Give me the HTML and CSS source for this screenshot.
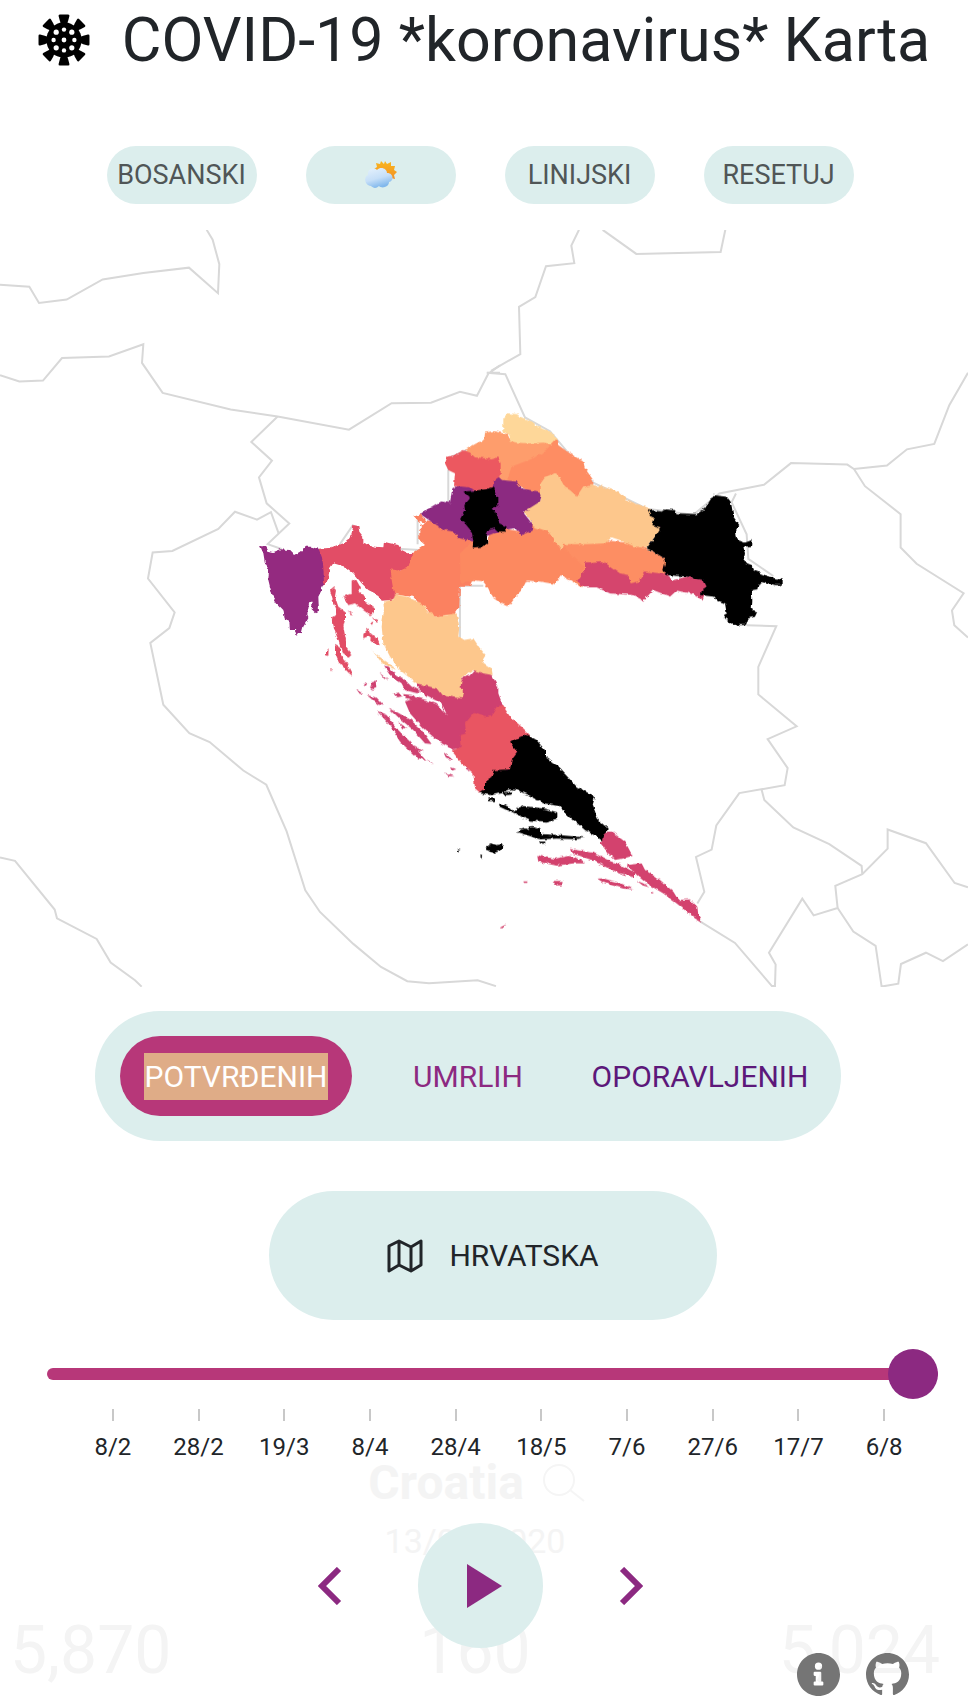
FILE: index.html
```html
<!DOCTYPE html>
<html lang="hr">
<head>
<meta charset="utf-8">
<meta name="viewport" content="width=device-width, initial-scale=1">
<title>COVID-19 *koronavirus* Karta</title>
<link rel="stylesheet" href="styles.css">
</head>
<body>
<header class="header">
  <svg class="virus" viewBox="-25 -25 50 50" aria-hidden="true">
    <defs><g id="spike"><path d="M-4-24.500H4Q5.500-24.500 5.200-23L4-18.500Q3-17 3-14H-3Q-3-17-4-18.500L-5.200-23Q-5.500-24.500-4-24.500Z"/></g></defs>
    <circle r="17"/>
    <use href="#spike"/><use href="#spike" transform="rotate(45)"/><use href="#spike" transform="rotate(90)"/><use href="#spike" transform="rotate(135)"/><use href="#spike" transform="rotate(180)"/><use href="#spike" transform="rotate(225)"/><use href="#spike" transform="rotate(270)"/><use href="#spike" transform="rotate(315)"/>
    <g fill="#fff"><circle r="2.300"/><circle cx="10" r="2.100"/><circle cx="-10" r="2.100"/><circle cy="10" r="2.100"/><circle cy="-10" r="2.100"/><circle cx="7.500" cy="7.500" r="2.500"/><circle cx="-7.500" cy="7.500" r="2.500"/><circle cx="7.500" cy="-7.500" r="2.500"/><circle cx="-7.500" cy="-7.500" r="2.500"/></g>
  </svg>
  <h1 class="title">COVID-19 *koronavirus* Karta</h1>
</header>

<nav class="options">
  <button class="option" type="button">BOSANSKI</button>
  <button class="option" type="button" aria-label="Tema">
    <svg class="weather" viewBox="0 0 32 28" aria-hidden="true">
      <defs>
        <linearGradient id="sun" x2="0" y2="1"><stop offset="0" stop-color="#f9b61c"/><stop offset="1" stop-color="#f28c28"/></linearGradient>
        <linearGradient id="cloud" x2=".4" y2="1"><stop offset="0" stop-color="#e6f2fd"/><stop offset=".6" stop-color="#c6dff8"/><stop offset="1" stop-color="#82b8ec"/></linearGradient>
      </defs>
      <path fill="url(#sun)" d="M20 0l2 3 4-2 0 4 4 0-1 4 3 2-3 3 1 4-4-1-2 3-14-9-1-3 3-2-1-4 4 1 1-3 3 3z"/>
      <path fill="url(#cloud)" d="M6 25C0 25-2 16 3 14 2 8 9 6 12 9 16 5 22 8 22 12 29 12 29 20 24 21 24 26 17 28 14 25 11 28 8 27 6 25Z"/>
    </svg>
  </button>
  <button class="option" type="button">LINIJSKI</button>
  <button class="option" type="button">RESETUJ</button>
</nav>

<svg class="map" viewBox="0 230 968 757" role="img" aria-label="Karta Hrvatske">
  <defs>
    <filter id="coast" x="-5%" y="-5%" width="110%" height="110%">
      <feTurbulence type="fractalNoise" baseFrequency=".2" numOctaves="2" seed="4"/>
      <feDisplacementMap in="SourceGraphic" scale="4" xChannelSelector="R" yChannelSelector="G"/>
    </filter>
  </defs>
  <g class="borders" transform="translate(0 220) scale(.3333 .4911)">
    <path d="M0 132 88 136 117 169 200 162 308 121 430 108 567 97 654 149 658 90 638 40 620 20"/>
    <path d="M0 316 58 329 129 327 186 281 327 278 430 253 426 291 488 352 692 386 833 400 1047 427 1175 373 1293 372 1380 350 1431 358 1465 313 1500 296M1462 311H1500"/>
    <path d="M833 400 754 452 816 490 777 524 800 577 868 618 803 660 845 670"/>
    <path d="M836 638 813 595 771 610 705 594 655 629 517 674 458 677 444 730 524 799 508 831 451 861 490 987 568 1045 629 1063 730 1121 799 1150 860 1245 916 1365 960 1409 1060 1474 1143 1521 1222 1550 1287 1554 1433 1548 1488 1560"/>
    <path d="M0 1298 45 1305 164 1404 171 1422 290 1464 332 1512 405 1548 425 1561"/>
    <path d="M1345 572V485L1400 468M1380 850V745H1450M1020 660 1060 620M1253 660V610M1150 668 1260 672"/>
  </g>
  <g class="borders" transform="translate(480 220) scale(.3333 .4911)">
    <path d="M297 20 274 52 283 88 198 94 166 157 117 177 121 273 33 307"/>
    <path d="M20 311 76 314 135 402 210 430 340 535 500 588 640 600 718 557 852 539 933 495 1102 498 1122 507 1221 500 1281 467 1363 456 1408 377 1464 311"/>
    <path d="M368 20 469 69 722 65 736 20"/>
    <path d="M1122 507 1155 542 1262 599V667L1310 700 1451 760 1416 795 1423 825 1464 850"/>
    <path d="M768 557 755 575 800 640 805 690 880 725"/>
    <path d="M800 825 889 827 835 910V966L950 1031 863 1057 923 1116 914 1151 778 1167 709 1233 695 1282 648 1297 673 1368 652 1392"/>
    <path d="M845 1160 853 1181 940 1237 1048 1271 1145 1315 1147 1332"/>
    <path d="M1464 1359 1424 1350 1338 1269 1223 1241V1280L1147 1332 1066 1356 1073 1401 1001 1416 967 1382 867 1492 887 1516 885 1560 876 1560 765 1472 660 1428"/>
    <path d="M1073 1401 1120 1449 1187 1478 1205 1561 1255 1555 1263 1515 1338 1492 1389 1509 1464 1475"/>
  </g>
  <g filter="url(#coast)">
    <g transform="translate(250 400) scale(.33333)">
      <path fill="#e24d66" d="M206 446 240 443 290 425 305 400 310 375 325 378 328 395 340 410 340 428 375 440 400 442 402 425 420 430 445 435 455 450 475 460 490 458 500 480 475 510 450 512 432 520 440 590 425 600 395 602 385 585 355 570 335 550 310 520 285 500 250 490 240 505 232 545 220 560 210 530Z"/>
      <path fill="#942c80" d="M30 437 45 440 52 452 68 456 90 448 118 450 132 465 150 455 165 440 185 440 206 446 215 470 220 500 222 545 215 570 205 590 207 635 198 640 185 628 188 605 178 605 172 640 175 655 160 680 155 700 150 695 140 708 135 690 120 690 118 665 105 660 100 630 80 610 68 590 60 560 55 540 57 510 45 490 40 460Z"/>
      <path fill="#fb8161" fill-rule="evenodd" d="M490 350 512 343 530 362 560 360 600 370 660 400 690 445 660 560 630 560 628 620 615 640 618 650 590 645 570 650 545 650 530 625 505 610 490 590 465 588 432 582 425 540 422 508 450 512 475 500 490 458 525 435 508 420 508 390 520 378 505 365ZM508 362 525 368 515 380Z"/>
    </g>
    <g transform="translate(420 400) scale(.33333)">
      <path fill="#fe9d6c" d="M135 150 165 132 193 118 195 98 220 93 262 102 272 120 330 120 405 120 405 160 350 200 285 250 240 245 230 175 200 185 165 180Z"/>
      <path fill="#fed799" d="M250 55 262 40 290 42 305 52 330 62 355 80 385 95 405 105 410 120 400 133 370 128 330 130 290 128 272 125 268 105 250 95Z"/>
      <path fill="#fe8d64" d="M262 238 275 200 340 175 378 150 408 118 415 135 450 160 490 185 495 205 520 240 520 265 490 280 472 300 400 280 360 290 330 275Z"/>
      <path fill="#fd8e63" d="M420 440 430 425 555 420 640 430 700 455 735 475 740 530 690 530 628 562 480 560 435 530Z"/>
      <path fill="#fc8961" d="M120 460 150 430 200 430 210 395 250 385 305 395 340 370 395 390 425 440 470 480 490 500 472 548 435 535 425 525 405 552 360 545 320 542 305 570 285 590 265 618 245 612 215 590 205 565 190 545 160 540 122 550Z"/>
      <path fill="#fdc78c" d="M312 335 320 325 362 300 362 250 375 232 400 220 412 220 435 262 450 270 472 290 490 262 515 255 545 258 600 278 615 295 645 310 690 325 715 350 730 380 705 410 680 445 640 438 600 420 575 412 555 430 500 432 430 432 425 450 405 425 385 395 340 380 330 360Z"/>
      <path fill="#8c2981" d="M0 342 35 320 60 305 90 308 97 265 125 250 180 260 222 245 232 225 250 240 290 245 305 265 355 275 365 285 360 305 320 330 312 340 328 360 338 375 335 392 305 405 285 385 245 390 160 425 120 415 100 395 75 390 50 375Z"/>
      <path fill="#ec5860" d="M75 190 82 170 105 165 130 150 150 158 165 172 200 175 215 178 235 172 242 190 242 230 230 235 215 262 195 270 165 272 150 262 102 258 105 220 85 210Z"/>
      <path fill="#d5446d" d="M470 545 495 510 495 488 545 483 565 495 600 520 625 525 632 550 655 545 675 515 740 522 760 540 800 530 860 540 862 560 848 602 820 582 770 572 750 590 700 570 670 602 640 585 600 582 570 580 530 562 490 562Z"/>
      <path fill="#000004" d="M683 328 725 335 735 328 765 330 770 340 830 342 855 325 880 285 920 290 932 305 940 350 958 375 945 395 948 418 975 428 995 420 993 438 970 440 975 460 970 485 995 495 1000 510 1045 530 1085 538 1085 555 1065 555 1030 545 1018 555 1015 568 995 570 997 600 995 628 1012 635 1005 650 985 655 978 675 940 675 915 655 912 645 920 640 915 610 890 600 880 590 840 585 842 572 860 560 850 540 800 530 740 525 730 510 735 490 733 475 700 455 680 445 705 410 722 382 697 375 705 350 690 345Z"/>
      <path fill="#000004" d="M130 275 165 272 195 268 222 260 228 285 235 290 235 315 218 325 232 345 238 370 260 380 255 395 235 395 225 385 205 390 200 405 202 430 190 440 158 443 160 420 155 395 135 370 120 358 135 330 133 315 150 295Z"/>
    </g>
    <g transform="translate(310 560) scale(.33333)">
      <path fill="#cf4070" d="M322 367 355 370 385 385 440 395 455 355 480 345 495 328 520 332 545 345 565 380 565 400 578 435 570 460 545 480 490 500 475 560 430 568 390 548 340 505 300 460 285 425 320 412 350 420 380 432 410 462 395 430 345 405 320 380Z"/>
      <path fill="#e95462" d="M578 435 600 470 640 505 660 525 640 600 570 660 525 698 512 700 495 685 490 640 455 610 425 572 455 560 452 525 468 520 465 490 495 455 525 468 545 465 560 440Z"/>
      <path fill="#fdc78c" d="M220 125 250 118 255 102 290 110 335 130 355 155 375 170 440 160 448 200 445 230 460 240 490 235 510 265 527 285 515 305 545 325 548 345 520 340 490 330 455 355 452 380 462 395 458 415 430 412 395 405 380 385 320 370 270 330 240 290 220 250 215 200 222 150ZM178 260 190 275 215 295 240 312 262 330 240 322 215 308Z"/>
      <path fill="#000004" d="M600 548 620 535 650 522 680 540 705 570 705 590 740 615 800 680 855 710 848 735 865 780 893 805 890 820 880 845 860 830 825 810 785 775 745 738 700 730 670 712 620 690 600 688 575 700 540 705 510 700 525 690 525 665 545 650 552 630 600 628 605 600 622 577ZM625 745 640 738 700 745 745 758 745 775 710 785 660 782 630 768 612 760 590 750 565 738 570 730 595 738 612 755ZM615 815 645 805 658 810 652 800 668 798 690 805 695 822 750 825 822 832 800 838 740 836 690 838 660 828ZM527 860 545 850 560 855 578 852 575 870 550 880 530 872ZM440 868 452 870 442 875ZM511 883 517 885 513 895ZM688 845H706V851H690ZM535 715H555V723H537ZM578 698 605 694 608 704 580 706Z"/>
      <path fill="#e24d66" d="M60 90 70 82 78 90 75 110 85 140 105 155 105 180 100 200 108 240 108 262 125 285 115 292 95 275 85 240 75 215 65 175 78 165 80 150 68 120ZM75 255 90 262 90 285 110 310 130 350 115 338 85 305 75 280ZM100 110 125 100 125 65 138 58 150 80 145 95 165 110 165 125 195 145 195 158 180 165 160 150 135 130 115 135ZM160 222 175 205 180 218 205 240 210 255 190 245 175 228 160 235ZM48 275 56 265 55 288 48 285ZM185 172 204 182 200 188ZM112 150 130 163 122 162ZM180 190 190 188 186 198ZM60 325 66 326 63 331Z"/>
      <path fill="#cf4070" d="M222 320 235 322 260 345 280 355 305 380 330 392 322 400 285 390 275 370 240 345ZM250 400 270 398 275 408 260 412ZM280 402 310 405 325 420 300 418 282 412ZM185 365 197 362 199 384 187 389 179 381 187 377ZM160 366 172 372 166 378ZM138 386 160 400 150 402ZM170 405 200 413 222 437 205 434ZM200 452 230 465 265 510 300 545 350 604 320 592 270 545 235 490ZM235 442 300 478 335 510 365 552 345 550 310 510 265 472ZM350 598 372 612 360 608ZM400 576 427 598 410 597ZM405 638 434 650 415 648ZM420 622 440 628 425 632ZM466 618 480 634 470 632ZM313 556 342 575 322 572ZM268 486 290 506 276 504ZM208 337 235 362 222 356Z"/>
    </g>
    <g fill="#d3436e" transform="translate(460 700) scale(.33333)">
      <path d="M440 395 455 395 495 425 518 468 490 475 465 480 445 460 422 430 430 405ZM330 447 360 452 400 458 440 478 480 493 525 518 525 533 480 520 440 502 400 482 360 468 335 460ZM500 495 545 490 555 510 600 540 640 575 655 600 690 598 712 620 715 645 727 668 705 655 650 610 610 580 560 550 530 525ZM232 465 250 470 285 476 325 468 350 472 375 490 340 490 290 497 250 489 235 485ZM412 536 430 535 480 549 522 568 490 566 430 548ZM275 543 308 543 305 556 285 556ZM190 544H202V549H192ZM120 681 139 674 130 682ZM530 542 550 550 568 562 548 556ZM572 572 582 575 575 578Z"/>
    </g>
  </g>
</svg>

<main class="controls">
  <div class="tabs">
    <button class="tab tab-confirmed" type="button" aria-pressed="true"><span class="marked">POTVRĐENIH</span></button>
    <button class="tab tab-deaths" type="button">UMRLIH</button>
    <button class="tab tab-recovered" type="button">OPORAVLJENIH</button>
  </div>

  <button class="region" type="button">
    <svg class="region-icon" viewBox="0 0 36 34" aria-hidden="true"><path d="M2 7 12 2 24 8 34 2V26L24 32 12 26 2 32ZM12 2V26M24 8V32"/></svg>
    HRVATSKA
  </button>

  <input class="slider" type="range" min="0" max="188" value="188" aria-label="Datum">
  <ol class="ticks">
    <li>8/2</li><li>28/2</li><li>19/3</li><li>8/4</li><li>28/4</li><li>18/5</li><li>7/6</li><li>27/6</li><li>17/7</li><li>6/8</li>
  </ol>
</main>

<section class="stage">
  <div class="summary">
    <div class="country"><strong>Croatia</strong>
      <svg class="search" viewBox="0 0 44 40" aria-hidden="true"><circle cx="17" cy="17" r="15"/><path d="M28 27 42 38"/></svg>
    </div>
    <div class="date">13/08/2020</div>
    <div class="totals"><span>5,870</span><span>160</span><span>5,024</span></div>
  </div>
  <div class="player">
    <button class="step" type="button" aria-label="Prethodni dan"><svg viewBox="0 0 24 38" aria-hidden="true"><path d="M21 2 4 19 21 36"/></svg></button>
    <button class="play" type="button" aria-label="Pokreni"><svg viewBox="0 0 36 44" aria-hidden="true"><path d="M0 0 35 22 0 44Z"/></svg></button>
    <button class="step" type="button" aria-label="Sljedeći dan"><svg viewBox="0 0 24 38" aria-hidden="true"><path d="M3 2 20 19 3 36"/></svg></button>
  </div>
  <div class="links">
    <a href="#info" aria-label="Informacije"><svg viewBox="8 8 496 496" aria-hidden="true"><path d="M256 8C119 8 8 119 8 256S119 504 256 504 504 393 504 256 393 8 256 8ZM256 118A42 42 0 1 1 256 202 42 42 0 0 1 256 118ZM312 372A12 12 0 0 1 300 384H212A12 12 0 0 1 200 372V348A12 12 0 0 1 212 336H224V272H212A12 12 0 0 1 200 260V236A12 12 0 0 1 212 224H276A12 12 0 0 1 288 236V336H300A12 12 0 0 1 312 348Z"/></svg></a>
    <a href="#github" aria-label="GitHub"><svg viewBox="0 0 16 16" aria-hidden="true"><path d="M8 0C3.58 0 0 3.58 0 8c0 3.54 2.29 6.53 5.47 7.59.4.07.55-.17.55-.38 0-.19-.01-.82-.01-1.49-2.01.37-2.53-.49-2.69-.94-.09-.23-.48-.94-.82-1.13-.28-.15-.68-.52-.01-.53.63-.01 1.08.58 1.23.82.72 1.21 1.87.87 2.33.66.07-.52.28-.87.51-1.07-1.78-.2-3.64-.89-3.64-3.95 0-.87.31-1.59.82-2.15-.08-.2-.36-1.02.08-2.12 0 0 .67-.21 2.2.82.64-.18 1.32-.27 2-.27s1.36.09 2 .27c1.53-1.04 2.2-.82 2.2-.82.44 1.1.16 1.92.08 2.12.51.56.82 1.27.82 2.15 0 3.07-1.87 3.75-3.65 3.95.29.25.54.73.54 1.48 0 1.07-.01 1.93-.01 2.2 0 .21.15.46.55.38A8.01 8.01 0 0 0 16 8c0-4.42-3.58-8-8-8Z"/></svg></a>
  </div>
</section>
</body>
</html>
```

FILE: styles.css
```css
* { box-sizing: border-box; }
body {
  margin: 0;
  background: #fff;
  color: #212529;
  font-family: Roboto, "Liberation Sans", sans-serif;
  overflow-x: hidden;
}
button {
  border: 0;
  background: none;
  padding: 0;
  font: inherit;
  color: inherit;
  cursor: pointer;
}
svg { display: block; }

.header {
  display: flex;
  align-items: center;
  justify-content: center;
  gap: 32px;
  height: 80px;
  margin-bottom: 66px;
}
.virus { width: 52px; height: 52px; flex: none; }
.title {
  margin: 0;
  font-size: 61px;
  line-height: 78px;
  font-weight: 400;
  white-space: nowrap;
}

.options {
  display: flex;
  justify-content: center;
  gap: 49px;
  margin-right: 8px;
}
.option {
  display: flex;
  align-items: center;
  justify-content: center;
  width: 150px;
  height: 58px;
  border-radius: 29px;
  background: #dceeed;
  color: #505657;
  font-size: 27px;
}
.weather { width: 32px; height: 28px; }

.map { width: 100%; height: auto; margin-top: 26px; }
.borders path {
  fill: none;
  stroke: #d8d8d8;
  stroke-width: 2px;
  vector-effect: non-scaling-stroke;
}

.controls { display: flex; flex-direction: column; }
.tabs {
  display: grid;
  grid-template-columns: repeat(3, 1fr);
  align-self: center;
  width: 746px;
  max-width: 100%;
  margin: 24px 32px 50px 0;
  padding: 25px;
  border-radius: 65px;
  background: #dceeed;
  font-size: 30px;
}
.tab { height: 80px; border-radius: 40px; }
.tab-confirmed { background: #b73779; color: #fff; }
.marked { display: inline-block; line-height: 47px; background: #dfac87; }
.tab-deaths { color: #8c2981; }
.tab-recovered { color: #5c187a; }

.region {
  display: flex;
  align-items: center;
  justify-content: center;
  align-self: center;
  gap: 26px;
  width: 448px;
  max-width: 100%;
  height: 129px;
  margin-left: 18px;
  border-radius: 65px;
  background: #dceeed;
  font-size: 30px;
}
.region-icon {
  width: 36px;
  height: 34px;
  fill: none;
  stroke: #212529;
  stroke-width: 3;
  stroke-linejoin: round;
}

.slider {
  appearance: none;
  height: 50px;
  margin: 29px 30px 10px 47px;
  background: transparent;
}
.slider::-webkit-slider-runnable-track {
  height: 12px;
  border-radius: 6px;
  background: #b73779;
}
.slider::-webkit-slider-thumb {
  appearance: none;
  width: 50px;
  height: 50px;
  margin-top: -19px;
  border-radius: 50%;
  background: #8c2981;
}
.ticks {
  display: grid;
  grid-template-columns: repeat(10, 1fr);
  margin: 0 41px 0 70px;
  padding: 0;
  list-style: none;
  font-size: 24px;
  line-height: 28px;
  text-align: center;
}
.ticks li::before {
  content: "";
  display: block;
  width: 2px;
  height: 12px;
  margin: 0 auto 12px;
  background: #c8c8c8;
}

.stage { display: grid; position: relative; }
.summary, .player { grid-area: 1 / 1; }
.summary { color: #f4f4f4; }
.country {
  display: flex;
  justify-content: center;
  align-items: center;
  gap: 18px;
  margin-right: 14px;
  font-size: 48px;
  line-height: 44px;
}
.search {
  width: 44px;
  height: 40px;
  fill: none;
  stroke: #f5f5f5;
  stroke-width: 2;
}
.date {
  margin: 16px 18px 0 0;
  font-size: 34px;
  line-height: 40px;
  text-align: center;
}
.totals {
  display: grid;
  grid-template-columns: 1fr 1fr 1fr;
  padding: 45px 28px 0 10px;
  font-size: 66px;
  line-height: 90px;
  text-align: center;
}
.totals span:first-child { text-align: left; }
.totals span:last-child { text-align: right; }

.player {
  display: flex;
  align-items: center;
  justify-content: center;
  align-self: start;
  gap: 76px;
  margin: 62px 8px 0 0;
}
.step { width: 24px; }
.step path { fill: none; stroke: #8c2981; stroke-width: 6; }
.play {
  display: flex;
  align-items: center;
  justify-content: center;
  width: 125px;
  height: 125px;
  padding-left: 10px;
  border-radius: 50%;
  background: #dceeed;
}
.play svg { width: 36px; height: 44px; fill: #8c2981; }

.links {
  position: absolute;
  right: 59px;
  bottom: 0;
  display: flex;
  gap: 26px;
}
.links svg { width: 43px; height: 43px; fill: #757575; }
```
